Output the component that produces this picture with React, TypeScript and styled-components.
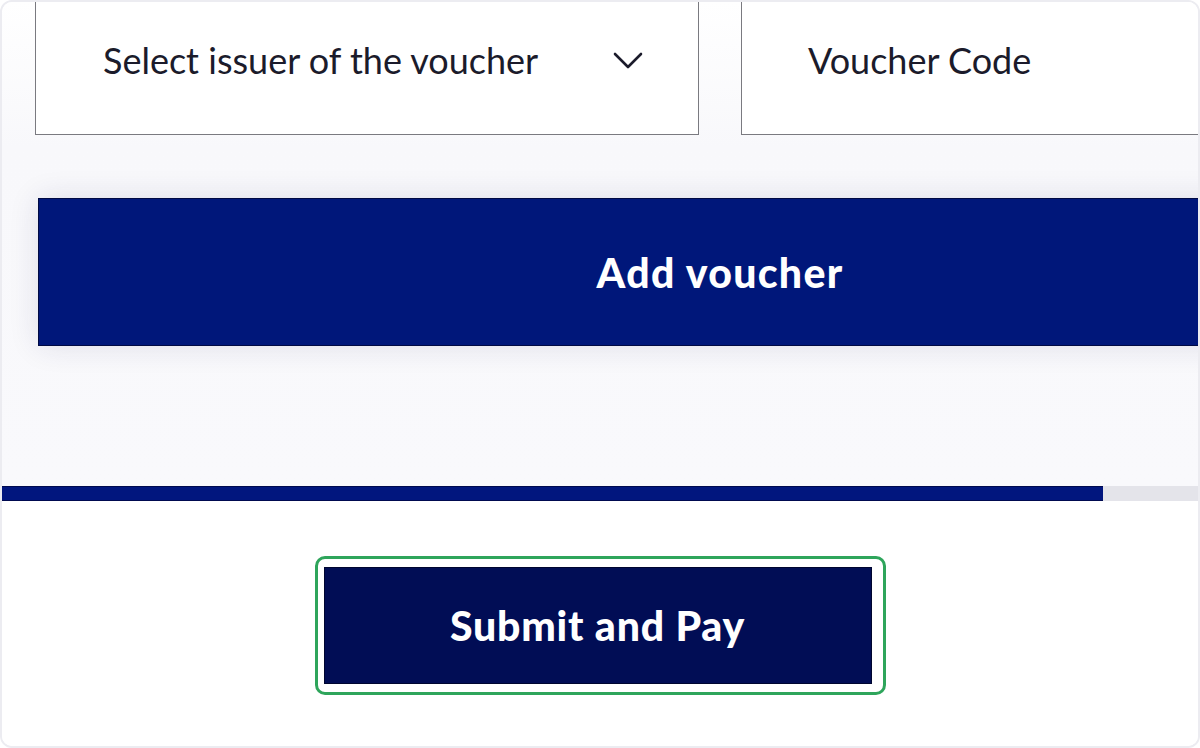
import styled, { createGlobalStyle } from "styled-components";

const GlobalStyle = createGlobalStyle`
  html, body {
    margin: 0;
    padding: 0;
    background: #ffffff;
  }
  * {
    box-sizing: border-box;
  }
`;

const colors = {
  navy: "#00177a",
  navyDark: "#010d55",
  progress: "#01167e",
  track: "#e4e4ea",
  text: "#1b1b2b",
  fieldBorder: "#7a7a80",
  frame: "#ececf1",
  green: "#2ea55b",
};

const progress = 0.9205;

const ChevronDown = () => (
  <svg width="30" height="20" viewBox="0 0 30 20" fill="none">
    <polyline
      points="2,3 15,16 28,3"
      stroke={colors.text}
      strokeWidth="2.6"
      strokeLinecap="round"
      strokeLinejoin="round"
    />
  </svg>
);

const App = () => {
  return (
    <>
      <GlobalStyle />
      <Frame>
        <VoucherSection>
          <FieldRow>
            <Field>
              <FieldText>Select issuer of the voucher</FieldText>
              <ChevronSlot>
                <ChevronDown />
              </ChevronSlot>
            </Field>
            <Field $wide>
              <FieldText>Voucher Code</FieldText>
            </Field>
          </FieldRow>
          <AddButton>Add voucher</AddButton>
        </VoucherSection>
        <ProgressTrack>
          <ProgressFill style={{ width: `${progress * 100}%` }} />
        </ProgressTrack>
        <FooterSection>
          <FocusRing>
            <SubmitButton>Submit and Pay</SubmitButton>
          </FocusRing>
        </FooterSection>
      </Frame>
    </>
  );
};

const Frame = styled.div`
  width: 1200px;
  height: 748px;
  border: 2px solid ${colors.frame};
  border-radius: 12px;
  overflow: hidden;
  display: flex;
  flex-direction: column;
  background: #ffffff;
`;

const VoucherSection = styled.div`
  height: 484px;
  flex: none;
  display: flex;
  flex-direction: column;
  padding: 0 0 0 33px;
  background: linear-gradient(180deg, #ffffff 0%, #f8f8fb 30%, #f9f9fc 100%);
  overflow: hidden;
`;

const FieldRow = styled.div`
  display: flex;
  gap: 42px;
  margin-top: -17px;
`;

const Field = styled.div<{ $wide?: boolean }>`
  flex: none;
  width: ${(props) => (props.$wide ? "560px" : "664px")};
  height: 150px;
  display: flex;
  align-items: center;
  padding: 0 0 0 ${(props) => (props.$wide ? "66px" : "67px")};
  border: 1.5px solid ${colors.fieldBorder};
  border-right: ${(props) => (props.$wide ? "none" : `1.5px solid ${colors.fieldBorder}`)};
  background: #ffffff;
`;

const FieldText = styled.span`
  font-family: Lato, "Liberation Sans", sans-serif;
  font-size: 36px;
  font-weight: 400;
  color: ${colors.text};
  letter-spacing: 0;
  white-space: nowrap;
`;

const ChevronSlot = styled.span`
  display: flex;
  margin-left: auto;
  margin-right: 55px;
  padding-top: 2px;
`;

const AddButton = styled.button`
  flex: none;
  width: 1364px;
  height: 148px;
  margin: 63px 0 0 3px;
  border: 1px solid #000a44;
  background: ${colors.navy};
  color: #ffffff;
  font-family: Lato, "Liberation Sans", sans-serif;
  font-size: 41px;
  font-weight: 900;
  letter-spacing: 1.3px;
  box-shadow: 0 0 28px rgba(30, 30, 90, 0.12);
  cursor: pointer;
`;

const ProgressTrack = styled.div`
  height: 15px;
  flex: none;
  background: ${colors.track};
`;

const ProgressFill = styled.div`
  height: 100%;
  background: ${colors.progress};
  border-top: 1px solid #000a50;
  border-bottom: 1px solid #000a50;
`;

const FooterSection = styled.div`
  flex: 1;
  display: flex;
  justify-content: center;
  align-items: flex-start;
  padding: 55px 0 0 0;
  background: #ffffff;
`;

const FocusRing = styled.div`
  padding: 8px 11px 8px 6px;
  border: 3px solid ${colors.green};
  border-radius: 10px;
  background: #ffffff;
`;

const SubmitButton = styled.button`
  display: block;
  width: 548px;
  height: 117px;
  border: 1.5px solid #000630;
  background: ${colors.navyDark};
  color: #ffffff;
  font-family: Lato, "Liberation Sans", sans-serif;
  font-size: 41px;
  font-weight: 900;
  letter-spacing: 0.8px;
  cursor: pointer;
`;

export default App;
